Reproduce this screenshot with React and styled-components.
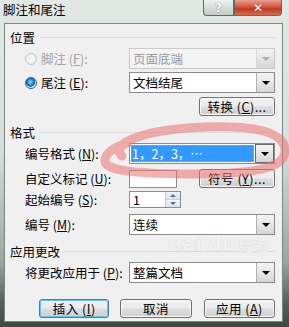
import React from "react";
import styled, { createGlobalStyle } from "styled-components";

const Global = createGlobalStyle`
  html, body {
    margin: 0;
    padding: 0;
    background: #3e4a43;
  }
  body {
    font-family: "Noto Sans CJK SC", "DejaVu Sans", sans-serif;
  }
`;

const Window = styled.div`
  position: relative;
  width: 289px;
  height: 327px;
  display: flex;
  flex-direction: column;
  overflow: hidden;
  background: linear-gradient(
    to bottom,
    #e2e9e5 0%,
    #d6dfda 45%,
    #9aa69f 80%,
    #56635b 92%,
    #3c4841 100%
  );
`;

const TitleBar = styled.div`
  height: 23px;
  display: flex;
  align-items: flex-start;
  padding-left: 3px;
  flex-shrink: 0;
`;

const Title = styled.div`
  padding-top: 2px;
  font-size: 12.5px;
  line-height: 16px;
  color: #000;
`;

const Caption = styled.div`
  margin-left: auto;
  margin-right: 7px;
  display: flex;
`;

const CapButton = styled.div`
  height: 15px;
  width: ${(p) => p.w}px;
  display: flex;
  align-items: center;
  justify-content: center;
  border: 1px solid #5f6a64;
  border-top: none;
  border-radius: ${(p) => (p.close ? "0 0 4px 0" : "0 0 0 4px")};
  background: ${(p) =>
    p.close
      ? "linear-gradient(to bottom, #e8a08e 0%, #d2563f 45%, #c03a22 60%, #d96a4e 100%)"
      : "linear-gradient(to bottom, #eef2f0 0%, #d5ddd9 50%, #c3cdc8 100%)"};
  color: #fff;
  font-family: "DejaVu Sans", sans-serif;
  font-weight: bold;
  font-size: 12px;
  text-shadow: 0 0 1px #444;
`;

const Client = styled.div`
  flex: 1;
  margin: 0 6px 5px 4px;
  border: 1px solid #7d8882;
  background: #f0f0f0;
  display: flex;
  flex-direction: column;
  padding: 0 7px 0 5px;
`;

const GroupHeader = styled.div`
  display: flex;
  align-items: center;
  height: 14px;
  margin-top: ${(p) => p.mt}px;
  font-size: 12.5px;
  color: #000;
  gap: 5px;
  &::after {
    content: "";
    flex: 1;
    height: 1px;
    background: #d5dfe5;
  }
`;

const Row = styled.div`
  display: flex;
  align-items: center;
  height: ${(p) => p.h || 21}px;
  margin-top: ${(p) => p.mt}px;
  padding-left: 15px;
`;

const Label = styled.div`
  width: 104px;
  flex-shrink: 0;
  display: flex;
  align-items: center;
  font-size: 12.5px;
  color: ${(p) => (p.disabled ? "#a3a3a3" : "#000")};
  white-space: nowrap;
`;

const Radio = styled.span`
  width: 12px;
  height: 12px;
  border-radius: 50%;
  margin-right: 4px;
  box-sizing: border-box;
  border: 1px solid ${(p) => (p.disabled ? "#c7cbcd" : "#2c628b")};
  background: ${(p) =>
    p.disabled
      ? "radial-gradient(circle, #f4f4f4 40%, #e3e3e3 100%)"
      : "radial-gradient(circle at 45% 40%, #9fe0ff 0%, #2a8ad4 35%, #0f5aa0 55%, #e5eef4 60%, #c9d6df 100%)"};
`;

const Select = styled.div`
  width: 151px;
  height: 100%;
  box-sizing: border-box;
  display: flex;
  border: 1px solid ${(p) => (p.disabled ? "#c8c8c8" : "#8c8c8c")};
  background: ${(p) => (p.disabled ? "#f4f4f4" : "#fff")};
`;

const SelectValue = styled.div`
  flex: 1;
  display: flex;
  align-items: center;
  padding-left: 3px;
  font-size: 12.5px;
  color: ${(p) => (p.disabled ? "#9a9a9a" : "#000")};
  ${(p) =>
    p.focused &&
    `
    margin: 1px;
    padding-left: 1px;
    background: #3399ff;
    color: #fff;
    outline: 1px dotted #e0a040;
    outline-offset: -1px;
  `}
`;

const Arrow = styled.div`
  width: 17px;
  display: flex;
  align-items: center;
  justify-content: center;
  border-left: 1px solid ${(p) => (p.disabled ? "#d8d8d8" : "#b0b0b0")};
  background: linear-gradient(to bottom, #f4f4f4 0%, #e6e6e6 50%, #d6d6d6 100%);
  ${(p) => p.focused && "border: 1px solid #6a6a6a;"}
  &::after {
    content: "";
    border-left: 4px solid transparent;
    border-right: 4px solid transparent;
    border-top: 4px solid ${(p) => (p.disabled ? "#b0b0b0" : "#000")};
  }
`;

const Field = styled.div`
  width: ${(p) => p.w}px;
  height: ${(p) => p.h}px;
  box-sizing: border-box;
  border: 1px solid #8c8c8c;
  background: #fff;
  display: flex;
  align-items: center;
  font-size: 12.5px;
  padding-left: 3px;
  padding-right: ${(p) => (p.spin ? 0 : 3)}px;
`;

const SpinText = styled.div`
  flex: 1;
`;

const Spin = styled.div`
  width: 14px;
  height: 100%;
  display: flex;
  flex-direction: column;
  border-left: 1px solid #c8c8c8;
`;

const SpinHalf = styled.div`
  flex: 1;
  display: flex;
  align-items: center;
  justify-content: center;
  background: linear-gradient(to bottom, #f0f3f6, #dce4ec);
  border-bottom: ${(p) => (p.up ? "1px solid #c8d0d8" : "none")};
  &::after {
    content: "";
    border-left: 3px solid transparent;
    border-right: 3px solid transparent;
    ${(p) =>
      p.up ? "border-bottom: 3px solid #4c6f98;" : "border-top: 3px solid #4c6f98;"}
  }
`;

const Button = styled.div`
  width: ${(p) => p.w || 76}px;
  height: ${(p) => p.h || 19}px;
  box-sizing: border-box;
  margin-left: ${(p) => p.ml || 0}px;
  display: flex;
  align-items: center;
  justify-content: center;
  border: 1px solid ${(p) => (p.primary ? "#3c7fb1" : "#707070")};
  border-radius: 3px;
  font-size: 12.5px;
  color: #000;
  background: linear-gradient(to bottom, #f2f2f2 0%, #ebebeb 48%, #dddddd 52%, #cfcfcf 100%);
  box-shadow: ${(p) =>
    p.primary ? "inset 0 0 0 1px #5fc6f4" : "inset 0 0 0 1px #fbfbfb"};
  letter-spacing: 0.5px;
`;

const Spacer = styled.div`
  flex: 1;
`;

const ButtonRow = styled.div`
  display: flex;
  height: 19px;
  margin-top: 16px;
  padding-left: 29px;
`;

const Mark = styled.svg`
  position: absolute;
  left: 0;
  top: 0;
  pointer-events: none;
`;

const Watermark = styled.div`
  position: absolute;
  left: 168px;
  top: 233px;
  font-family: "DejaVu Sans", sans-serif;
  font-size: 19px;
  font-weight: bold;
  color: rgba(255, 255, 255, 0.75);
  text-shadow: 0 0 1px rgba(0, 0, 0, 0.18);
  pointer-events: none;
  white-space: nowrap;
  span {
    font-family: "Noto Sans CJK SC", sans-serif;
    font-size: 15px;
    margin-left: 3px;
  }
`;

const Mn = ({ k }) => (
  <>
    (<u>{k}</u>):
  </>
);

const App = () => {
  return (
    <Window>
      <Global />
      <TitleBar>
        <Title>脚注和尾注</Title>
        <Caption>
          <CapButton w={29}>?</CapButton>
          <CapButton w={46} close>
            ✕
          </CapButton>
        </Caption>
      </TitleBar>
      <Client>
        <GroupHeader mt={6}>位置</GroupHeader>
        <Row mt={4}>
          <Label disabled>
            <Radio disabled />
            脚注 <Mn k="F" />
          </Label>
          <Select disabled>
            <SelectValue disabled>页面底端</SelectValue>
            <Arrow disabled />
          </Select>
        </Row>
        <Row mt={3}>
          <Label>
            <Radio />
            尾注 <Mn k="E" />
          </Label>
          <Select>
            <SelectValue>文档结尾</SelectValue>
            <Arrow />
          </Select>
        </Row>
        <Row mt={4} h={19}>
          <Spacer />
          <Button>
            转换 (<u>C</u>)...
          </Button>
        </Row>

        <GroupHeader mt={9}>格式</GroupHeader>
        <Row mt={4}>
          <Label>
            编号格式 <Mn k="N" />
          </Label>
          <Select>
            <SelectValue focused>1，2，3，…</SelectValue>
            <Arrow focused />
          </Select>
        </Row>
        <Row mt={5} h={19}>
          <Label>
            自定义标记 <Mn k="U" />
          </Label>
          <Field w={48} h={18} />
          <Spacer />
          <Button>
            符号 (<u>Y</u>)...
          </Button>
        </Row>
        <Row mt={3} h={17}>
          <Label>
            起始编号 <Mn k="S" />
          </Label>
          <Field w={52} h={17} spin>
            <SpinText>1</SpinText>
            <Spin>
              <SpinHalf up />
              <SpinHalf />
            </Spin>
          </Field>
        </Row>
        <Row mt={6}>
          <Label>
            编号 <Mn k="M" />
          </Label>
          <Select>
            <SelectValue>连续</SelectValue>
            <Arrow />
          </Select>
        </Row>

        <GroupHeader mt={9}>应用更改</GroupHeader>
        <Row mt={4}>
          <Label>
            将更改应用于 <Mn k="P" />
          </Label>
          <Select>
            <SelectValue>整篇文档</SelectValue>
            <Arrow />
          </Select>
        </Row>

        <ButtonRow>
          <Button w={72} primary>
            插入 (<u>I</u>)
          </Button>
          <Button w={73} ml={11}>
            取消
          </Button>
          <Button w={73} ml={12}>
            应用 (<u>A</u>)
          </Button>
        </ButtonRow>
      </Client>

      <Watermark>
        Bai du<span>经验</span>
      </Watermark>

      <Mark width="289" height="327" viewBox="0 0 289 327">
        <path
          d="M 122 156 C 108 142, 150 129, 205 127 C 255 125, 284 132, 285 150 C 286 168, 255 174, 195 174 C 140 174, 103 171, 105 160 C 106 152, 114 147, 128 143"
          fill="none"
          stroke="rgba(236, 112, 112, 0.55)"
          strokeWidth="9"
          strokeLinecap="round"
        />
      </Mark>
    </Window>
  );
};

export default App;
